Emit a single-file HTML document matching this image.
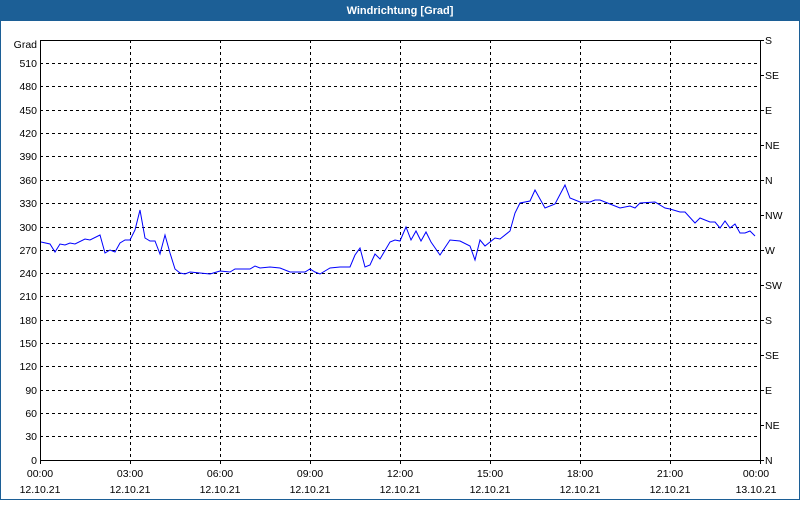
<!DOCTYPE html>
<html><head><style>
body{margin:0;width:800px;height:500px;overflow:hidden;background:#fff;font-family:"Liberation Sans",sans-serif}
</style></head><body>
<svg width="800" height="500" xmlns="http://www.w3.org/2000/svg" font-family="Liberation Sans, sans-serif" font-size="10.5">
<rect x="0" y="0" width="800" height="500" fill="#fff"/>
<rect x="0" y="0" width="800" height="21" fill="#1c5f96"/>
<rect x="0" y="0" width="1" height="500" fill="#1c5f96"/>
<rect x="799" y="0" width="1" height="500" fill="#1c5f96"/>
<rect x="0" y="499" width="800" height="1" fill="#1c5f96"/>
<text x="400" y="14" fill="#fff" font-weight="bold" font-size="11" text-anchor="middle">Windrichtung [Grad]</text>
<g stroke="#000" stroke-width="1" stroke-dasharray="3,3" shape-rendering="crispEdges">
<line x1="40" x2="760" y1="63.5" y2="63.5"/><line x1="40" x2="760" y1="86.5" y2="86.5"/><line x1="40" x2="760" y1="110.5" y2="110.5"/><line x1="40" x2="760" y1="133.5" y2="133.5"/><line x1="40" x2="760" y1="156.5" y2="156.5"/><line x1="40" x2="760" y1="180.5" y2="180.5"/><line x1="40" x2="760" y1="203.5" y2="203.5"/><line x1="40" x2="760" y1="227.5" y2="227.5"/><line x1="40" x2="760" y1="250.5" y2="250.5"/><line x1="40" x2="760" y1="273.5" y2="273.5"/><line x1="40" x2="760" y1="296.5" y2="296.5"/><line x1="40" x2="760" y1="320.5" y2="320.5"/><line x1="40" x2="760" y1="343.5" y2="343.5"/><line x1="40" x2="760" y1="366.5" y2="366.5"/><line x1="40" x2="760" y1="390.5" y2="390.5"/><line x1="40" x2="760" y1="413.5" y2="413.5"/><line x1="40" x2="760" y1="436.5" y2="436.5"/>
<line x1="130.5" x2="130.5" y1="40" y2="460"/><line x1="220.5" x2="220.5" y1="40" y2="460"/><line x1="310.5" x2="310.5" y1="40" y2="460"/><line x1="400.5" x2="400.5" y1="40" y2="460"/><line x1="490.5" x2="490.5" y1="40" y2="460"/><line x1="580.5" x2="580.5" y1="40" y2="460"/><line x1="670.5" x2="670.5" y1="40" y2="460"/>
</g>
<g stroke="#000" shape-rendering="crispEdges">
<rect x="40.5" y="40.5" width="720" height="420" fill="none"/>
<line x1="760" x2="764" y1="40.5" y2="40.5"/><line x1="760" x2="764" y1="75.5" y2="75.5"/><line x1="760" x2="764" y1="110.5" y2="110.5"/><line x1="760" x2="764" y1="145.5" y2="145.5"/><line x1="760" x2="764" y1="180.5" y2="180.5"/><line x1="760" x2="764" y1="215.5" y2="215.5"/><line x1="760" x2="764" y1="250.5" y2="250.5"/><line x1="760" x2="764" y1="285.5" y2="285.5"/><line x1="760" x2="764" y1="320.5" y2="320.5"/><line x1="760" x2="764" y1="355.5" y2="355.5"/><line x1="760" x2="764" y1="390.5" y2="390.5"/><line x1="760" x2="764" y1="425.5" y2="425.5"/><line x1="760" x2="764" y1="460.5" y2="460.5"/>
<line x1="40.5" x2="40.5" y1="460" y2="464"/><line x1="130.5" x2="130.5" y1="460" y2="464"/><line x1="220.5" x2="220.5" y1="460" y2="464"/><line x1="310.5" x2="310.5" y1="460" y2="464"/><line x1="400.5" x2="400.5" y1="460" y2="464"/><line x1="490.5" x2="490.5" y1="460" y2="464"/><line x1="580.5" x2="580.5" y1="460" y2="464"/><line x1="670.5" x2="670.5" y1="460" y2="464"/><line x1="760.5" x2="760.5" y1="460" y2="464"/>
</g>
<polyline fill="none" stroke="#0000ff" stroke-width="1" points="41,242 50,244 55,252 60,244 65,245 70,243 75,244 85,239 90,240 100,235 105,253 110,250 115,252 120,243 125,240 130,240 135,230 140,210 145,238 150,241 155,241 160,254 165,235 170,253 175,269 180,273 185,274 190,272 200,273 210,274 220,271 230,272 235,269 250,269 255,266 260,268 270,267 280,268 290,272 305,272 310,269 315,272 320,274 330,268 340,267 350,267 355,255 360,248 365,267 370,265 375,254 380,259 390,242 395,240 400,241 406,227 411,240 416,231 421,241 426,232 431,242 440,255 450,240 460,241 470,246 475,260 480,240 485,246 495,238 500,239 510,231 515,213 520,203 530,201 535,190 545,208 555,204 565,185 570,198 580,202 590,202 595,200 600,200 610,204 620,208 630,206 635,208 640,203 655,202 665,208 670,209 680,212 685,212 695,223 700,218 710,222 715,222 720,228 725,221 730,228 735,224 740,233 745,233 750,231 755,236"/>
<g fill="#000" text-anchor="end">
<text x="37" y="48">Grad</text>
<text x="37" y="67">510</text><text x="37" y="90">480</text><text x="37" y="114">450</text><text x="37" y="137">420</text><text x="37" y="160">390</text><text x="37" y="184">360</text><text x="37" y="207">330</text><text x="37" y="231">300</text><text x="37" y="254">270</text><text x="37" y="277">240</text><text x="37" y="300">210</text><text x="37" y="324">180</text><text x="37" y="347">150</text><text x="37" y="370">120</text><text x="37" y="394">90</text><text x="37" y="417">60</text><text x="37" y="440">30</text><text x="37" y="464">0</text>
</g>
<g fill="#000">
<text x="765" y="44">S</text><text x="765" y="79">SE</text><text x="765" y="114">E</text><text x="765" y="149">NE</text><text x="765" y="184">N</text><text x="765" y="219">NW</text><text x="765" y="254">W</text><text x="765" y="289">SW</text><text x="765" y="324">S</text><text x="765" y="359">SE</text><text x="765" y="394">E</text><text x="765" y="429">NE</text><text x="765" y="464">N</text>
</g>
<g fill="#000" text-anchor="middle">
<text x="40" y="477">00:00</text><text x="130" y="477">03:00</text><text x="220" y="477">06:00</text><text x="310" y="477">09:00</text><text x="400" y="477">12:00</text><text x="490" y="477">15:00</text><text x="580" y="477">18:00</text><text x="670" y="477">21:00</text><text x="756" y="477">00:00</text>
<text x="40" y="493">12.10.21</text><text x="130" y="493">12.10.21</text><text x="220" y="493">12.10.21</text><text x="310" y="493">12.10.21</text><text x="400" y="493">12.10.21</text><text x="490" y="493">12.10.21</text><text x="580" y="493">12.10.21</text><text x="670" y="493">12.10.21</text><text x="756" y="493">13.10.21</text>
</g>
</svg>
</body></html>
